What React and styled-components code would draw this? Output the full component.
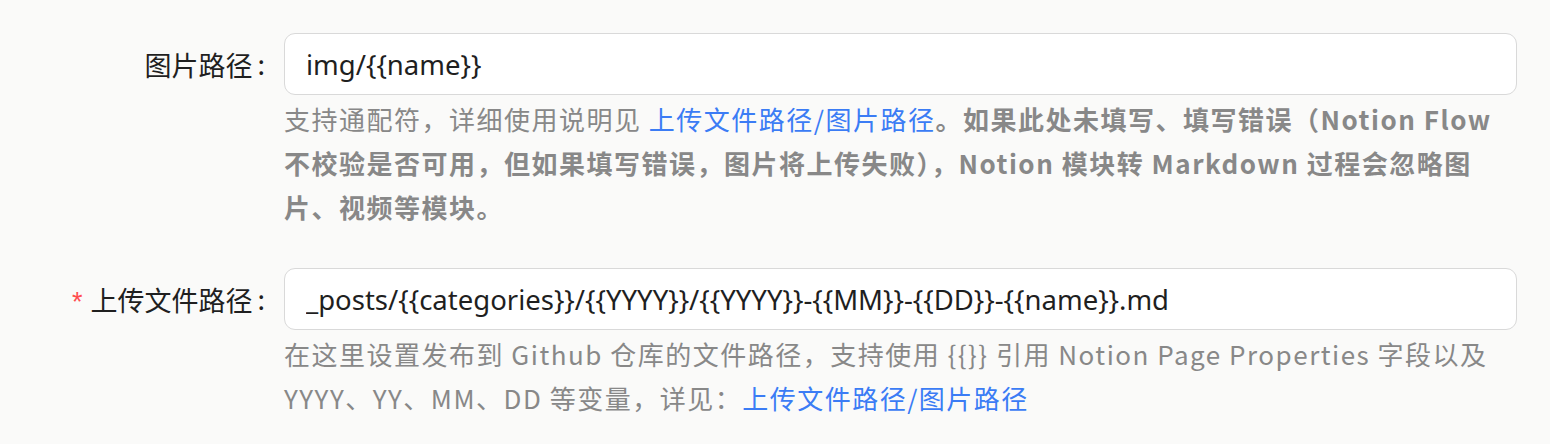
import React from "react";
import styled, { createGlobalStyle } from "styled-components";

const Global = createGlobalStyle`
  html, body { margin: 0; padding: 0; background: #fafaf9; }
  body { font-family: "Noto Sans CJK SC", "Noto Sans", sans-serif; }
  * { box-sizing: border-box; }
`;

const Form = styled.div`
  display: flex;
  flex-direction: column;
  gap: 39px;
  padding: 33px 33px 0 0;
`;

const Row = styled.div`
  display: grid;
  grid-template-columns: 284px 1fr;
  align-items: start;
`;

const Label = styled.label`
  display: flex;
  align-items: center;
  justify-content: flex-end;
  height: 62px;
  padding-right: 19px;
  font-size: 27px;
  color: #1f1f1f;
  white-space: nowrap;
  &::after {
    content: ":";
    margin-left: 5px;
    position: relative;
    top: -1px;
  }
`;

const Required = styled.span`
  color: #ff4d4f;
  font-family: "Liberation Sans", sans-serif;
  font-size: 27px;
  margin-right: 8px;
  position: relative;
  top: 3px;
`;

const Control = styled.div`
  display: flex;
  flex-direction: column;
`;

const Input = styled.input`
  height: 62px;
  width: 100%;
  border: 1.5px solid #d9d9d9;
  border-radius: 11px;
  background: #ffffff;
  padding: 0 21px;
  font-family: "Noto Sans", "Noto Sans CJK SC", sans-serif;
  font-size: 27.5px;
  color: #1f1f1f;
  outline: none;
`;

const Help = styled.div`
  margin-top: 2px;
  font-size: 26px;
  line-height: 44px;
  letter-spacing: 1.5px;
  color: #888888;
`;

const Link = styled.a`
  color: #3b7cf5;
  text-decoration: none;
`;

const Strong = styled.b`
  font-weight: 700;
`;

export default function App() {
  return (
    <>
      <Global />
      <Form>
        <Row>
          <Label>图片路径</Label>
          <Control>
            <Input defaultValue="img/{{name}}" />
            <Help>
              支持通配符，详细使用说明见 <Link href="#">上传文件路径/图片路径</Link>
              <Strong>
                。如果此处未填写、填写错误（Notion Flow 不校验是否可用，但如果填写错误，图片将上传失败），Notion 模块转 Markdown 过程会忽略图片、视频等模块。
              </Strong>
            </Help>
          </Control>
        </Row>
        <Row>
          <Label>
            <Required>*</Required>上传文件路径
          </Label>
          <Control>
            <Input defaultValue="_posts/{{categories}}/{{YYYY}}/{{YYYY}}-{{MM}}-{{DD}}-{{name}}.md" />
            <Help>
              在这里设置发布到 Github 仓库的文件路径，支持使用 {"{{}}"} 引用 Notion Page Properties 字段以及 YYYY、YY、MM、DD 等变量，详见：
              <Link href="#">上传文件路径/图片路径</Link>
            </Help>
          </Control>
        </Row>
      </Form>
    </>
  );
}
